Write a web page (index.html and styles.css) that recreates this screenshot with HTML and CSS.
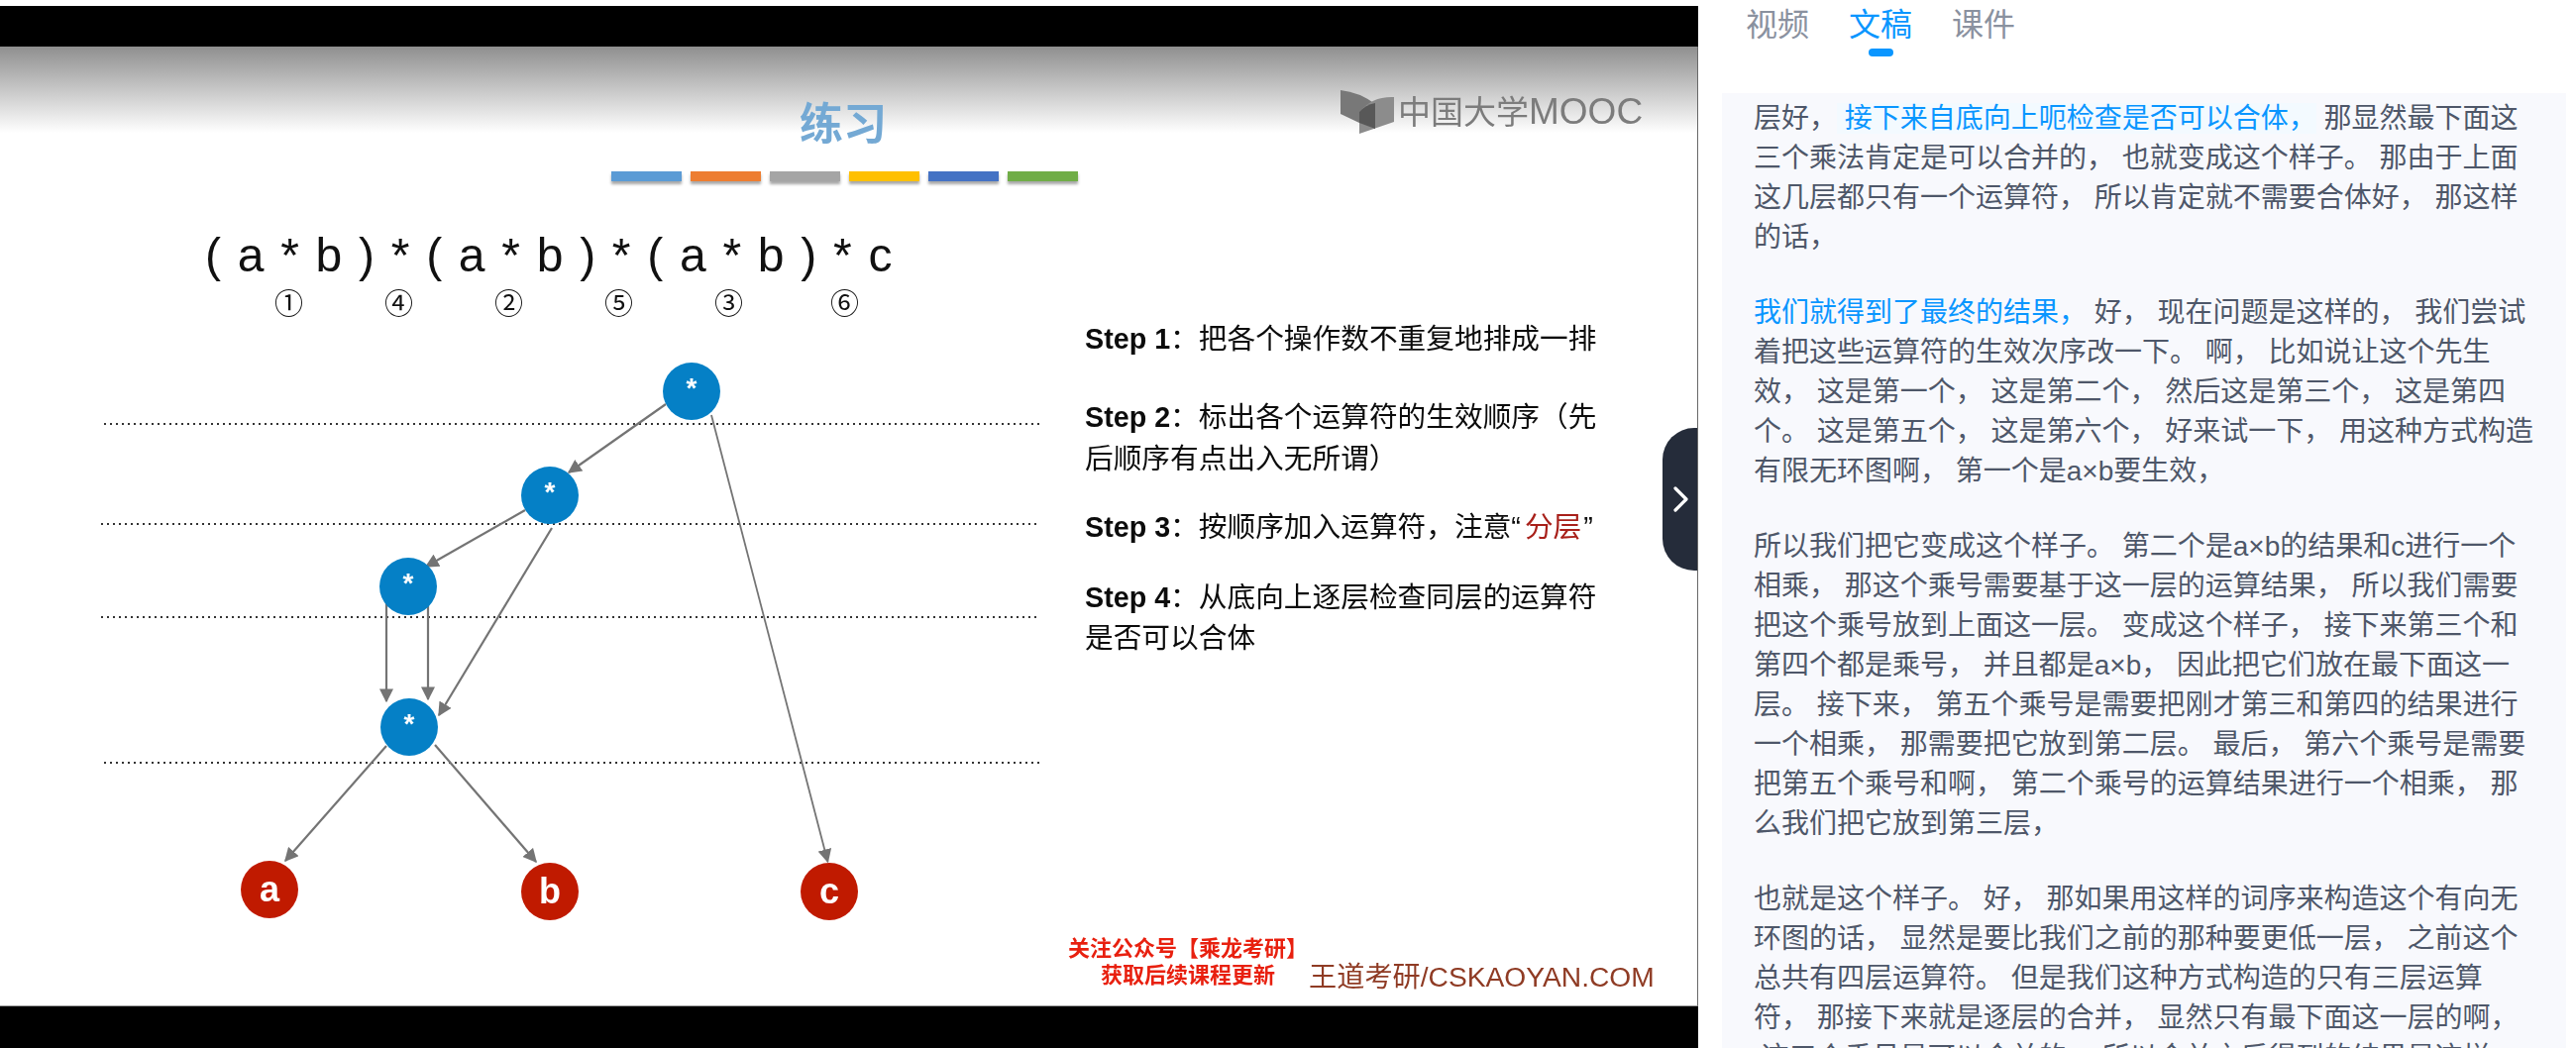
FILE: index.html
```html
<!DOCTYPE html>
<html lang="zh">
<head>
<meta charset="utf-8">
<title>文稿</title>
<link rel="stylesheet" href="styles.css">
</head>
<body>
<div class="page">
  <main class="video">
    <div class="bar bar-top"></div>
    <div class="slide-frame">
      <div class="slide">
        <div class="slide-head"></div>
        <div class="title">练习</div>
        <div class="accents"><i class="a1"></i><i class="a2"></i><i class="a3"></i><i class="a4"></i><i class="a5"></i><i class="a6"></i></div>
        <div class="logo">
          <svg class="logo-icon" width="54" height="44" viewBox="1353 91 54 44">
            <path class="page-l" d="M1353 91Q1372 93 1388 105V130L1372 124L1353 115Z"/>
            <path class="page-r" d="M1407 98Q1385 97 1372 113V135L1407 123Z"/>
            <path class="page-d" d="M1372 113Q1378 106 1388 104V130L1372 124Z"/>
          </svg>
          <span class="logo-text">中国大学<span class="logo-latin">MOOC</span></span>
        </div>
        <div class="expr">( a * b ) * ( a * b ) * ( a * b ) * c</div>
        <div class="order"><span>①</span><span>④</span><span>②</span><span>⑤</span><span>③</span><span class="order-last">⑥</span></div>
        <svg class="diagram" viewBox="0 47 1713 969" width="1713" height="969">
          <defs>
            <marker id="arrow-lg" viewBox="0 0 10 10" refX="9" refY="5" markerWidth="14" markerHeight="14" markerUnits="userSpaceOnUse" orient="auto"><path d="M0 0L10 5L0 10Z" fill="#747474"/></marker>
          </defs>
          <line class="dots" x1="105" y1="428" x2="1053" y2="428"/>
          <line class="dots" x1="102" y1="529" x2="1050" y2="529"/>
          <line class="dots" x1="102" y1="623" x2="1050" y2="623"/>
          <line class="dots" x1="105" y1="770" x2="1053" y2="770"/>
          <line class="edge" x1="672" y1="408" x2="574" y2="477" marker-end="url(#arrow-lg)"/>
          <line class="edge" x1="530" y1="515" x2="430" y2="572" marker-end="url(#arrow-lg)"/>
          <line class="edge" x1="557" y1="533" x2="443" y2="722" marker-end="url(#arrow-lg)"/>
          <line class="edge" x1="390" y1="608" x2="390" y2="708" marker-end="url(#arrow-lg)"/>
          <line class="edge" x1="432" y1="607" x2="432" y2="706" marker-end="url(#arrow-lg)"/>
          <line class="edge edge-thin" x1="718" y1="419" x2="835.500" y2="870" marker-end="url(#arrow-lg)"/>
          <line class="edge" x1="390" y1="753" x2="288" y2="869" marker-end="url(#arrow-lg)"/>
          <line class="edge" x1="439" y1="752" x2="541" y2="870" marker-end="url(#arrow-lg)"/>
          <circle class="op" cx="698" cy="395" r="29"/><text class="op-t" x="698" y="401">*</text>
          <circle class="op" cx="555" cy="500" r="29"/><text class="op-t" x="555" y="506">*</text>
          <circle class="op" cx="412" cy="592" r="29"/><text class="op-t" x="412" y="598">*</text>
          <circle class="op" cx="413" cy="734" r="29"/><text class="op-t" x="413" y="740">*</text>
          <circle class="leaf" cx="272" cy="898" r="29"/><text class="leaf-t" x="272" y="910">a</text>
          <circle class="leaf" cx="555" cy="900" r="29"/><text class="leaf-t" x="555" y="912">b</text>
          <circle class="leaf" cx="837" cy="900" r="29"/><text class="leaf-t" x="837" y="912">c</text>
        </svg>
        <ol class="steps">
          <li class="step-first"><b>Step 1</b>：把各个操作数不重复地排成一排</li>
          <li><b>Step 2</b>：标出各个运算符的生效顺序（先后顺序有点出入无所谓）</li>
          <li class="step-third"><b>Step 3</b>：按顺序加入运算符，注意“<em>分层</em>”</li>
          <li><b>Step 4</b>：从底向上逐层检查同层的运算符是否可以合体</li>
        </ol>
        <div class="notice"><span>关注公众号【乘龙考研】</span><span class="notice-two">获取后续课程更新</span></div>
        <div class="site">王道考研/CSKAOYAN.COM</div>
      </div>
    </div>
    <div class="bar bar-bottom"></div>
    <button class="collapse" type="button" aria-label="收起">
      <svg width="16" height="26" viewBox="0 0 16 26"><path d="M2 2L13 13L2 24" fill="none" stroke="#fff" stroke-width="3.200" stroke-linecap="round" stroke-linejoin="round"/></svg>
    </button>
  </main>
  <aside class="side">
    <nav class="tabs">
      <a class="tab">视频</a>
      <a class="tab tab-on">文稿</a>
      <a class="tab">课件</a>
    </nav>
    <section class="transcript">
      <p>层好，<span class="now"> 接下来自底向上呃检查是否可以合体，</span> 那显然最下面这三个乘法肯定是可以合并的， 也就变成这个样子。 那由于上面这几层都只有一个运算符， 所以肯定就不需要合体好， 那这样的话，</p>
      <p><span class="blue">我们就得到了最终的结果，</span> 好， 现在问题是这样的， 我们尝试着把这些运算符的生效次序改一下。 啊， 比如说让这个先生效， 这是第一个， 这是第二个， 然后这是第三个， 这是第四个。 这是第五个， 这是第六个， 好来试一下， 用这种方式构造有限无环图啊， 第一个是a×b要生效，</p>
      <p>所以我们把它变成这个样子。 第二个是a×b的结果和c进行一个相乘， 那这个乘号需要基于这一层的运算结果， 所以我们需要把这个乘号放到上面这一层。 变成这个样子， 接下来第三个和第四个都是乘号， 并且都是a×b， 因此把它们放在最下面这一层。 接下来， 第五个乘号是需要把刚才第三和第四的结果进行一个相乘， 那需要把它放到第二层。 最后， 第六个乘号是需要把第五个乘号和啊， 第二个乘号的运算结果进行一个相乘， 那么我们把它放到第三层，</p>
      <p>也就是这个样子。 好， 那如果用这样的词序来构造这个有向无环图的话， 显然是要比我们之前的那种要更低一层， 之前这个总共有四层运算符。 但是我们这种方式构造的只有三层运算符， 那接下来就是逐层的合并， 显然只有最下面这一层的啊， &nbsp;这三个乘号是可以合并的， 所以合并之后得到的结果是这样</p>
    </section>
  </aside>
</div>
</body>
</html>
```

FILE: styles.css
```css
* { box-sizing: border-box; }
html, body { margin: 0; padding: 0; background: #fff; }
body { font-family: "Liberation Sans", "Noto Sans CJK SC", sans-serif; }
.page { display: flex; width: 2600px; height: 1058px; overflow: hidden; }

.video { position: relative; width: 1714px; height: 1058px; padding-top: 6px; display: flex; flex-direction: column; flex: none; }
.bar { background: #000; flex: none; }
.bar-top { height: 41px; }
.bar-bottom { height: 42px; }
.slide-frame { flex: 1; overflow: hidden; border-right: 1px solid #686868; border-bottom: 1px solid #9a9a9a; background: #fff; }
.slide { position: relative; width: 1713px; height: 969px; filter: blur(0.6px); }
.slide-head { height: 87px; background: linear-gradient(#8f8f8f, #ffffff); }

.title { position: absolute; left: 807px; top: 45px; font: 700 44px/60px "Noto Sans CJK SC", sans-serif; color: #74a9d4; }
.accents { position: absolute; left: 617px; top: 126px; display: flex; gap: 9px; }
.accents i { display: block; width: 71px; height: 10px; box-shadow: 0 3px 3px rgba(0,0,0,.35); }
.accents .a1 { background: #5b9bd5; }
.accents .a2 { background: #ed7d31; }
.accents .a3 { background: #a5a5a5; }
.accents .a4 { background: #ffc000; }
.accents .a5 { background: #4472c4; }
.accents .a6 { background: #70ad47; }

.logo { position: absolute; left: 1353px; top: 44px; display: flex; align-items: flex-start; gap: 4px; color: #7c7c7c; }
.logo-icon { flex: none; display: block; }
.page-l { fill: #787878; }
.page-r { fill: #8c8c8c; }
.page-d { fill: #585858; }
.logo-text { font: 400 33px/46px "Noto Sans CJK SC", sans-serif; white-space: nowrap; margin-top: -3px; }
.logo-latin { font: 400 37px/46px "Liberation Sans", sans-serif; }

.expr { position: absolute; left: 207px; top: 181px; font: 400 48px/60px "Liberation Sans", sans-serif; letter-spacing: 1.700px; color: #111; white-space: nowrap; }
.order { position: absolute; left: 277px; top: 237px; display: flex; gap: 82px; font: 400 29px/40px "Noto Sans CJK SC", sans-serif; color: #111; }
.order-last { margin-left: 6px; }

.diagram { position: absolute; left: 0; top: 0; display: block; }
.dots { stroke: #333; stroke-width: 2; stroke-dasharray: 2 4; }
.edge { stroke: #747474; stroke-width: 2.200; }
.edge-thin { stroke-width: 1.800; }
.op { fill: #0580c6; }
.leaf { fill: #c01a00; }
.op-t { font: 700 28px "Liberation Sans", sans-serif; fill: #fff; text-anchor: middle; }
.leaf-t { font: 700 36px "Liberation Sans", sans-serif; fill: #fff; text-anchor: middle; }

.steps { position: absolute; left: 1095px; top: 275px; width: 522px; margin: 0; padding: 0; list-style: none; font: 400 28.700px/41.500px "Liberation Sans", "Noto Sans CJK SC", sans-serif; color: #0c0c0c; }
.steps li { margin-bottom: 27.500px; }
.steps .step-first { margin-bottom: 37.500px; }
.steps .step-third { margin-bottom: 29.500px; }
.steps b { font-weight: 700; }
.steps em { font-style: normal; color: #a8201a; margin: 0 2px 0 4px; }

.notice { position: absolute; left: 1078px; top: 895px; display: flex; flex-direction: column; font: 700 22px/26.500px "Noto Sans CJK SC", sans-serif; color: #e8200f; white-space: nowrap; }
.notice-two { margin-left: 33px; }
.site { position: absolute; left: 1321px; top: 923px; font: 400 28.200px/32px "Liberation Sans", "Noto Sans CJK SC", sans-serif; color: #8f3b24; white-space: nowrap; }

.collapse { position: absolute; left: 1678px; top: 432px; width: 35px; height: 144px; padding: 0 0 0 2px; border: 0; border-radius: 32px 0 0 32px; background: #252c3a; display: flex; align-items: center; justify-content: center; }

.side { flex: 1; height: 1058px; display: flex; flex-direction: column; overflow: hidden; }
.tabs { flex: none; height: 94px; display: flex; gap: 40px; padding-left: 48px; }
.tab { display: flex; flex-direction: column; align-items: center; width: 64px; font: 400 32px/44px "Noto Sans CJK SC", sans-serif; color: #8a919f; }
.tab-on { color: #0a96ff; }
.tab-on::after { content: ""; display: block; width: 25px; height: 8px; margin-top: 5px; border-radius: 4px; background: #0a96ff; }
.transcript { flex: 1; min-height: 0; overflow: hidden; margin: 0 10px 0 24px; padding: 6px 30px 0 32px; background: #f8f9fd; font: 400 28px/40px "Liberation Sans", "Noto Sans CJK SC", sans-serif; color: #4e5769; }
.transcript p { margin: 0 0 36px; }
.now { color: #0a96ff; background: #f3faff; }
.blue { color: #0a96ff; }
```
